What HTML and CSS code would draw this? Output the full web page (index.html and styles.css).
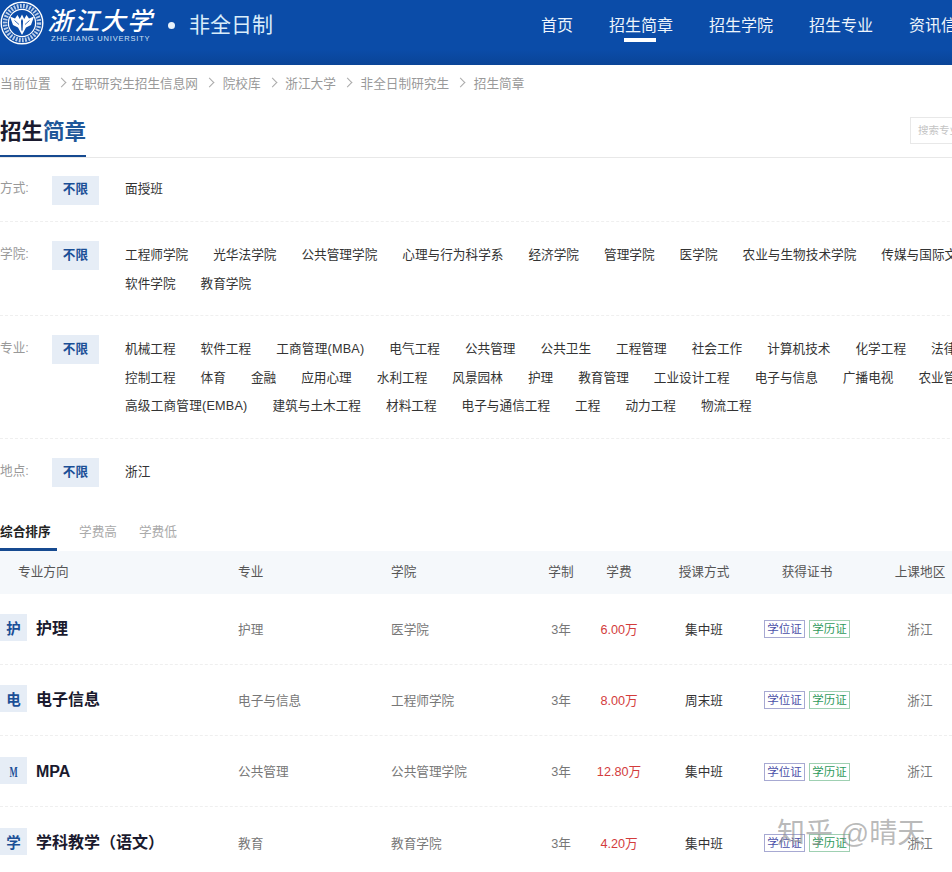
FILE: index.html
```html
<!DOCTYPE html>
<html lang="zh-CN">
<head>
<meta charset="utf-8">
<title>招生简章</title>
<link rel="stylesheet" href="styles.css">
</head>
<body>
<div class="page">
  <header class="top">
    <div class="brand">
      <svg class="emblem" width="44" height="44" viewBox="0 0 44 44">
        <circle cx="22" cy="22" r="20.8" fill="#0b4ca8" stroke="#fff" stroke-width="1.4"/>
        <circle cx="22" cy="22" r="17" fill="none" stroke="#e6eef8" stroke-width="4.500" stroke-dasharray="1.800 1.300" opacity=".8"/>
        <circle cx="22" cy="22" r="13.6" fill="#0b4ca8" stroke="#fff" stroke-width="1.2"/>
        <path d="M10 15.500 L15 17.500 L17.500 14 L19.800 18 L22 13.500 L24.200 18 L26.500 14 L29 17.500 L34 15.500 L31 24 L26 26.500 L22 34 L18 26.500 L13 24 Z" fill="#fff"/>
        <path d="M21 20 L22 17.500 L23 20 L22.600 29 L22 30.500 L21.400 29 Z" fill="#0b4ca8"/>
        <path d="M14.500 19.500 L19 23.500 M29.500 19.500 L25 23.500" stroke="#0b4ca8" stroke-width=".8" fill="none"/>
      </svg>
      <div class="wordmark">
        <div class="wm-cn">浙江大学</div>
        <div class="wm-en">ZHEJIANG UNIVERSITY</div>
      </div>
      <span class="dot"></span>
      <span class="site">非全日制</span>
    </div>
    <nav class="nav">
      <a>首页</a>
      <a class="on">招生简章</a>
      <a>招生学院</a>
      <a>招生专业</a>
      <a>资讯信息</a>
    </nav>
  </header>

  <div class="crumbs">
    <span>当前位置</span><i class="chev"></i>
    <span>在职研究生招生信息网</span><i class="chev"></i>
    <span>院校库</span><i class="chev"></i>
    <span>浙江大学</span><i class="chev"></i>
    <span>非全日制研究生</span><i class="chev"></i>
    <span>招生简章</span>
  </div>

  <div class="title-bar">
    <h1 class="title">招生<em>简章</em></h1>
    <div class="search">搜索专业</div>
  </div>

  <section class="filters">
    <div class="frow">
      <span class="flabel">方式:</span><span class="chip">不限</span>
      <div class="fitems"><a>面授班</a></div>
    </div>
    <div class="frow">
      <span class="flabel">学院:</span><span class="chip">不限</span>
      <div class="fitems">
        <a>工程师学院</a><a>光华法学院</a><a>公共管理学院</a><a>心理与行为科学系</a><a>经济学院</a><a>管理学院</a><a>医学院</a><a>农业与生物技术学院</a><a>传媒与国际文化学院</a><a>软件学院</a><a>教育学院</a>
      </div>
    </div>
    <div class="frow">
      <span class="flabel">专业:</span><span class="chip">不限</span>
      <div class="fitems">
        <a>机械工程</a><a>软件工程</a><a class="lat">工商管理(MBA)</a><a>电气工程</a><a>公共管理</a><a>公共卫生</a><a>工程管理</a><a>社会工作</a><a>计算机技术</a><a>化学工程</a><a>法律硕士</a><a>控制工程</a><a>体育</a><a>金融</a><a>应用心理</a><a>水利工程</a><a>风景园林</a><a>护理</a><a>教育管理</a><a>工业设计工程</a><a>电子与信息</a><a>广播电视</a><a>农业管理</a><a class="lat">高级工商管理(EMBA)</a><a>建筑与土木工程</a><a>材料工程</a><a>电子与通信工程</a><a>工程</a><a>动力工程</a><a>物流工程</a>
      </div>
    </div>
    <div class="frow last">
      <span class="flabel">地点:</span><span class="chip">不限</span>
      <div class="fitems"><a>浙江</a></div>
    </div>
  </section>

  <div class="tabs">
    <a class="on">综合排序</a><a>学费高</a><a>学费低</a>
  </div>

  <div class="thead grid">
    <div class="h1">专业方向</div><div>专业</div><div>学院</div><div class="c">学制</div><div class="c">学费</div><div class="c">授课方式</div><div class="c">获得证书</div><div class="c">上课地区</div>
  </div>

  <div class="trow grid">
    <div class="name"><span class="ico">护</span><b>护理</b></div><div class="g">护理</div><div class="g">医学院</div><div class="c g">3年</div><div class="c fee">6.00万</div><div class="c dk">集中班</div>
    <div class="c tags"><span class="tag pu">学位证</span><span class="tag gr">学历证</span></div><div class="c g">浙江</div>
  </div>
  <div class="trow grid">
    <div class="name"><span class="ico">电</span><b>电子信息</b></div><div class="g">电子与信息</div><div class="g">工程师学院</div><div class="c g">3年</div><div class="c fee">8.00万</div><div class="c dk">周末班</div>
    <div class="c tags"><span class="tag pu">学位证</span><span class="tag gr">学历证</span></div><div class="c g">浙江</div>
  </div>
  <div class="trow grid">
    <div class="name"><span class="ico"><span class="narrow">M</span></span><b class="latin">MPA</b></div><div class="g">公共管理</div><div class="g">公共管理学院</div><div class="c g">3年</div><div class="c fee">12.80万</div><div class="c dk">集中班</div>
    <div class="c tags"><span class="tag pu">学位证</span><span class="tag gr">学历证</span></div><div class="c g">浙江</div>
  </div>
  <div class="trow grid">
    <div class="name"><span class="ico">学</span><b>学科教学（语文）</b></div><div class="g">教育</div><div class="g">教育学院</div><div class="c g">3年</div><div class="c fee">4.20万</div><div class="c dk">集中班</div>
    <div class="c tags"><span class="tag pu">学位证</span><span class="tag gr">学历证</span></div><div class="c g">浙江</div>
  </div>

  <div class="watermark">知乎 @晴天</div>
</div>
</body>
</html>
```
FILE: styles.css
```css
* { box-sizing: border-box; }
html, body { margin: 0; padding: 0; background: #fff; }
body { font-family: "Liberation Sans", "Noto Sans CJK SC", sans-serif; }
.page { position: relative; width: 952px; height: 872px; overflow: hidden; color: #333; }
a { color: inherit; text-decoration: none; }

.top { height: 65px; display: flex; justify-content: space-between; background: linear-gradient(#0b4ca8 0, #0b4ca8 50px, #0a4497 65px); color: #fff; width: 1060px; }
.brand { display: flex; align-items: flex-start; }
.emblem { margin-top: 1px; flex: none; }
.wordmark { margin-left: 6px; padding-top: 5px; width: 112px; }
.wm-cn { font-family: "Noto Sans CJK SC", sans-serif; font-size: 25px; line-height: 29px; font-weight: 500; letter-spacing: 1.5px; transform: skewX(-14deg); white-space: nowrap; }
.wm-en { font-size: 7.5px; line-height: 9px; letter-spacing: .8px; color: #cfe0f3; white-space: nowrap; padding-left: 1px; }
.dot { width: 7px; height: 7px; border-radius: 50%; background: #e8f2fb; margin: 22px 14px 0 6px; flex: none; }
.site { font-size: 21px; line-height: 50px; color: #d9edfa; white-space: nowrap; }
.nav { display: flex; gap: 36px; margin-right: 87px; font-size: 16px; line-height: 51px; }
.nav a { position: relative; white-space: nowrap; color: #eef5fc; }
.nav a.on::after { content: ""; position: absolute; left: 15px; right: 17px; top: 38px; height: 4px; background: #fff; }

.crumbs { height: 38px; padding-bottom: 3px; display: flex; align-items: center; font-size: 12.65px; color: #999; white-space: nowrap; }
.chev { width: 7px; height: 7px; border-top: 1px solid #aaa; border-right: 1px solid #aaa; transform: rotate(45deg); margin: 0 9.7px 0 8px; flex: none; }
.chev:first-of-type { margin: 0 7px; }

.title-bar { height: 55px; border-bottom: 1px solid #e8e8e8; display: flex; justify-content: space-between; align-items: flex-start; }
.title { margin: 0; height: 54px; width: 86px; border-bottom: 2px solid #164a90; font-size: 21.5px; line-height: 58px; font-weight: 700; color: #1a1a2e; white-space: nowrap; }
.title em { font-style: normal; color: #1e5799; }
.search { width: 60px; height: 27px; margin-top: 14px; margin-right: -18px; padding-left: 7px; border: 1px solid #e8e8e8; font-size: 10.5px; line-height: 25px; color: #c4c4c4; white-space: nowrap; overflow: hidden; }

.filters { width: 1040px; }
.frow { display: flex; align-items: flex-start; padding: 19px 0 17px; border-bottom: 1px dashed #efefef; }
.frow:first-child { padding: 17px 0 16px; }
.frow:first-child .chip { margin-top: 1px; line-height: 27px; }
.frow.last { border-bottom: 0; padding-bottom: 0; }
.flabel { width: 52px; flex: none; font-size: 12.65px; line-height: 26px; color: #999; }
.chip { width: 47px; height: 29px; flex: none; background: #e6edf6; color: #1b4f96; font-size: 12.65px; font-weight: 700; line-height: 29px; text-align: center; }
.fitems { margin-left: 26px; flex: 1; display: flex; flex-wrap: wrap; column-gap: 25px; font-size: 12.65px; line-height: 28.5px; color: #333; white-space: nowrap; }
.lat { letter-spacing: .2px; }

.tabs { display: flex; gap: 22px; height: 36px; margin-top: 28px; font-size: 12.65px; line-height: 34px; color: #aaa; }
.tabs a { display: block; white-space: nowrap; }
.tabs a.on { width: 57px; height: 36px; font-weight: 700; color: #222; border-bottom: 3px solid #164a90; }

.grid { display: grid; grid-template-columns: 238px 153px 140px 60px 56px 114px 92px 134px; width: 987px; align-items: center; font-size: 12.65px; }
.thead { height: 43px; padding-bottom: 4px; background: #f5f8fb; color: #555; white-space: nowrap; }
.h1 { padding-left: 18px; }
.c { text-align: center; }
.trow { height: 71.3px; padding-bottom: 1px; border-bottom: 1px dashed #efefef; white-space: nowrap; }
.trow:last-of-type { border-bottom: 0; }
.g { color: #777; }
.dk { color: #333; }
.fee { color: #d33c3c; }
.name { display: flex; align-items: center; gap: 9px; font-size: 16px; color: #1a1a2e; margin-bottom: 1px; }
.name b { font-weight: 700; margin-bottom: 1px; }
.name b.latin { margin-bottom: 0; padding-top: 3px; }
.ico { width: 27px; height: 27px; flex: none; background: #e6edf6; color: #1b4f96; font-size: 14.5px; font-weight: 700; line-height: 30px; text-align: center; }
.narrow { display: inline-block; font-family: "Liberation Serif", serif; font-size: 14px; line-height: 27px; transform: scaleX(.62); }
.tags { display: flex; justify-content: center; gap: 4px; margin-top: 2px; }
.tag { width: 41px; height: 18px; border: 1px solid; font-size: 11.5px; line-height: 17px; text-align: center; }
.pu { color: #4a4fa8; border-color: #a7a9d2; }
.gr { color: #2f9a5c; border-color: #9fd0b2; }

.watermark { position: absolute; left: 777px; top: 816px; font-size: 28px; line-height: 36px; color: rgba(140,140,140,.6); white-space: nowrap; }
```
